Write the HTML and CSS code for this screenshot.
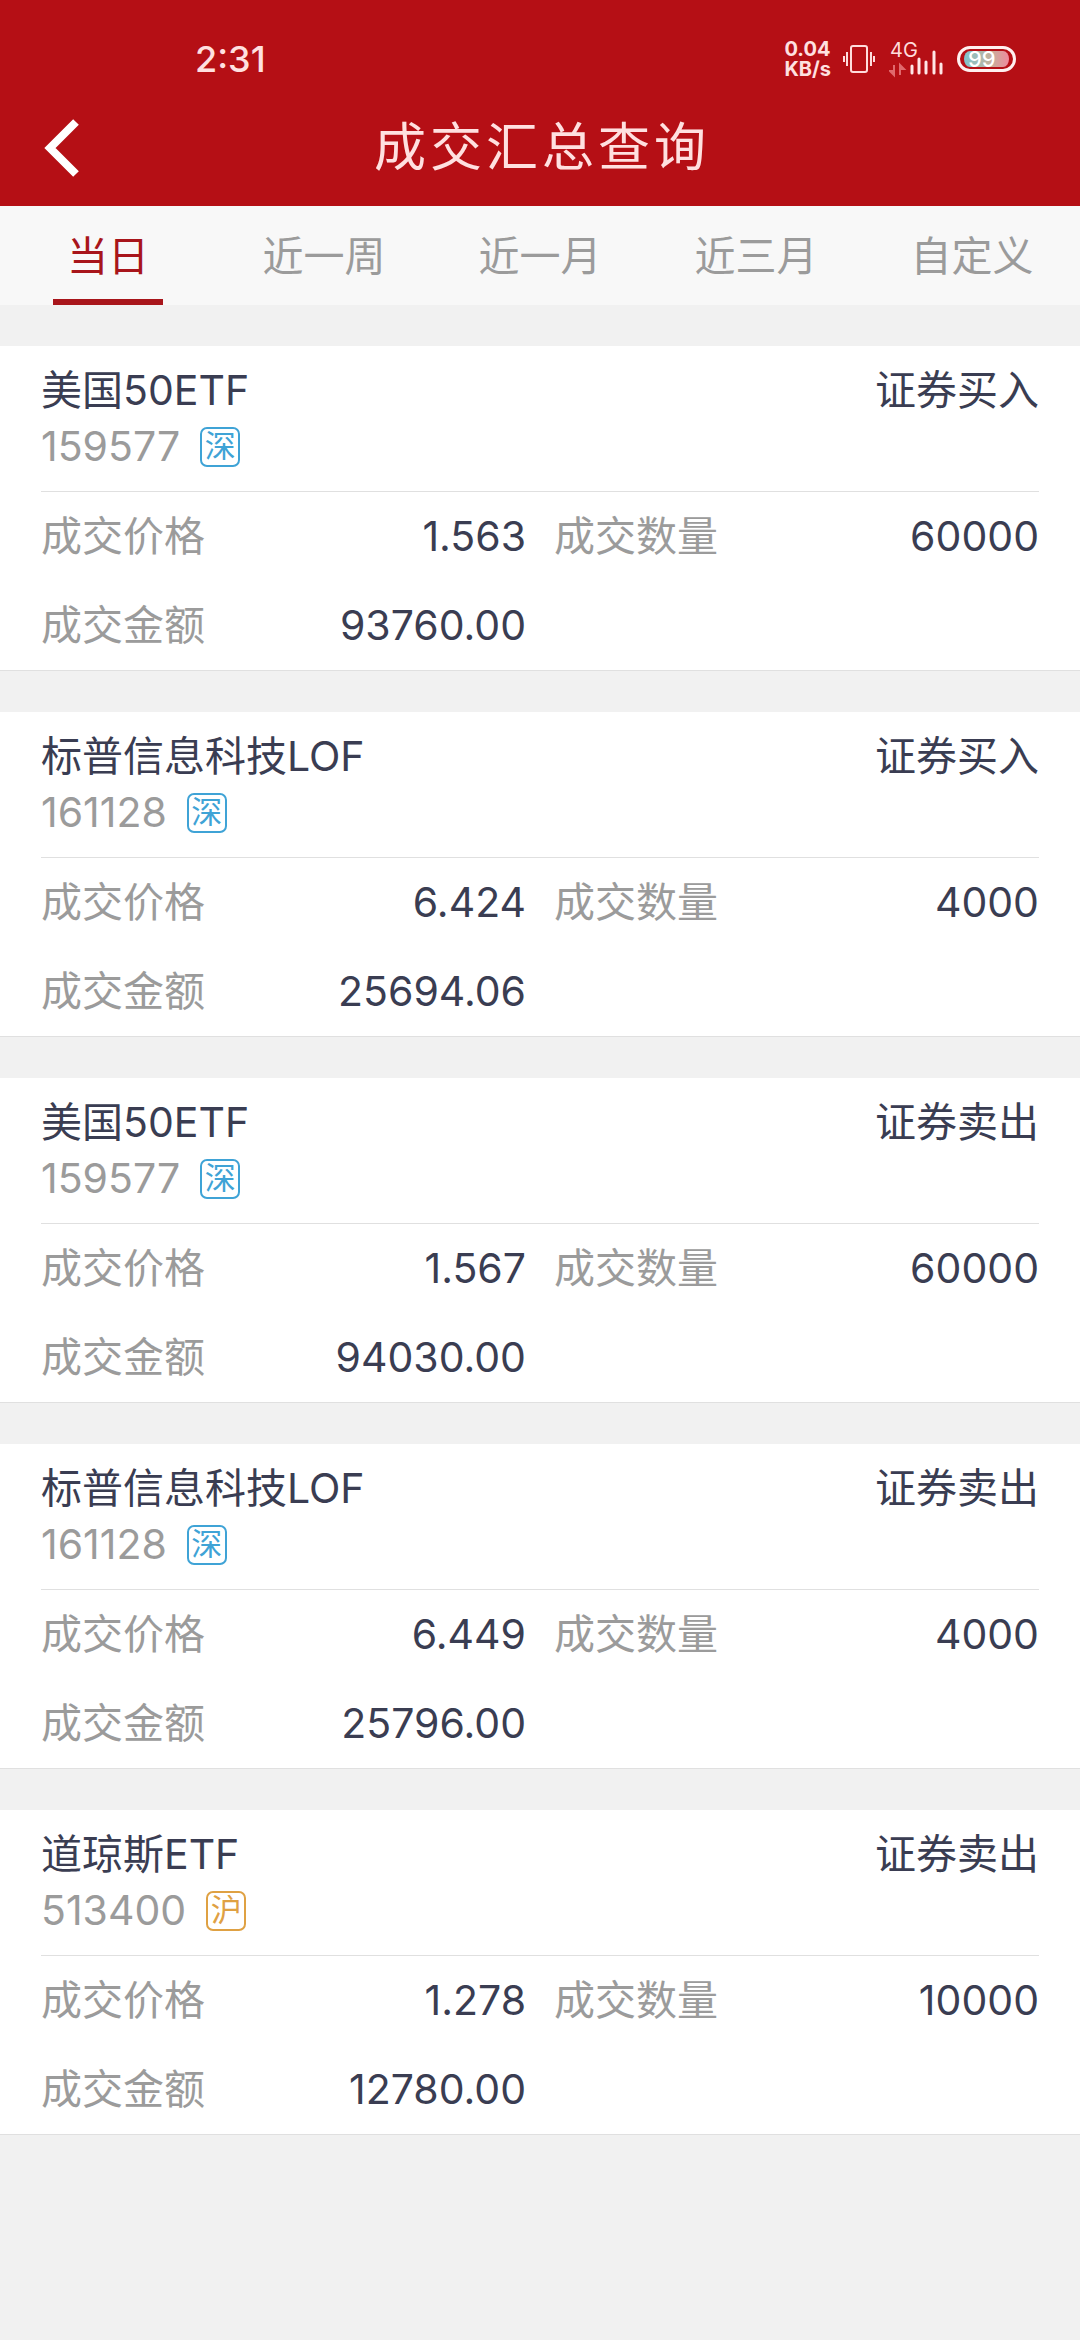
FILE: index.html
```html
<!DOCTYPE html>
<html lang="zh-CN">
<head>
    <meta charset="UTF-8">
    <meta name="viewport" content="width=device-width, initial-scale=1.0">
    <title>成交汇总查询</title>
    <link rel="stylesheet" href="styles.css">
</head>
<body>
    <!-- Header -->
    <header class="header">
        <div class="status-bar">
            <span class="time">2:31</span>
            <div class="status-icons">
                <div class="speed"><div>0.04</div><div>KB/s</div></div>
                <svg class="vibrate" width="32" height="30" viewBox="0 0 32 30" fill="none" stroke="#ffdcdc" stroke-width="2">
                    <rect x="8" y="2" width="16" height="26" rx="2"/>
                    <path d="M4 8v14M1 12v6M28 8v14M31 12v6"/>
                </svg>
                <svg class="signal" width="56" height="46" viewBox="0 -6 56 46">
                    <text x="1" y="15" font-size="20" fill="#ffdcdc">4G</text>
                    <path d="M5 23v10M1 29l4 4v-4zM11 33V23M11 23l4 4h-4z" fill="#e0696d" stroke="#e0696d" stroke-width="2"/>
                    <path d="M23 24v7M30 17v14M37 20v11M45 10v21M52 22v9" stroke="#ffe6e6" stroke-width="3" stroke-linecap="round"/>
                </svg>
                <div class="battery"><span>99</span></div>
            </div>
        </div>
        <div class="title-bar">
            <button class="back" aria-label="返回">
                <svg width="40" height="60" viewBox="0 0 40 60" fill="none" stroke="#fff" stroke-width="8">
                    <path d="M34 4L8 30l26 26"/>
                </svg>
            </button>
            <h1>成交汇总查询</h1>
        </div>
    </header>

    <!-- Date range -->
    <nav class="tabs">
        <button class="tab active">当日</button>
        <button class="tab">近一周</button>
        <button class="tab">近一月</button>
        <button class="tab">近三月</button>
        <button class="tab">自定义</button>
    </nav>

    <!-- Deals -->
    <main class="deals">
        <section class="deal">
            <div class="deal-head">
                <div class="row"><h2>美国50ETF</h2><span>证券买入</span></div>
                <div class="code">159577 <span class="market sz">深</span></div>
            </div>
            <dl class="deal-data">
                <div><dt>成交价格</dt><dd>1.563</dd></div>
                <div><dt>成交数量</dt><dd>60000</dd></div>
                <div><dt>成交金额</dt><dd>93760.00</dd></div>
            </dl>
        </section>

        <section class="deal">
            <div class="deal-head">
                <div class="row"><h2>标普信息科技LOF</h2><span>证券买入</span></div>
                <div class="code">161128 <span class="market sz">深</span></div>
            </div>
            <dl class="deal-data">
                <div><dt>成交价格</dt><dd>6.424</dd></div>
                <div><dt>成交数量</dt><dd>4000</dd></div>
                <div><dt>成交金额</dt><dd>25694.06</dd></div>
            </dl>
        </section>

        <section class="deal">
            <div class="deal-head">
                <div class="row"><h2>美国50ETF</h2><span>证券卖出</span></div>
                <div class="code">159577 <span class="market sz">深</span></div>
            </div>
            <dl class="deal-data">
                <div><dt>成交价格</dt><dd>1.567</dd></div>
                <div><dt>成交数量</dt><dd>60000</dd></div>
                <div><dt>成交金额</dt><dd>94030.00</dd></div>
            </dl>
        </section>

        <section class="deal">
            <div class="deal-head">
                <div class="row"><h2>标普信息科技LOF</h2><span>证券卖出</span></div>
                <div class="code">161128 <span class="market sz">深</span></div>
            </div>
            <dl class="deal-data">
                <div><dt>成交价格</dt><dd>6.449</dd></div>
                <div><dt>成交数量</dt><dd>4000</dd></div>
                <div><dt>成交金额</dt><dd>25796.00</dd></div>
            </dl>
        </section>

        <section class="deal">
            <div class="deal-head">
                <div class="row"><h2>道琼斯ETF</h2><span>证券卖出</span></div>
                <div class="code">513400 <span class="market sh">沪</span></div>
            </div>
            <dl class="deal-data">
                <div><dt>成交价格</dt><dd>1.278</dd></div>
                <div><dt>成交数量</dt><dd>10000</dd></div>
                <div><dt>成交金额</dt><dd>12780.00</dd></div>
            </dl>
        </section>
    </main>

    <script>
        document.querySelectorAll('.tab').forEach(tab => {
            tab.addEventListener('click', () => {
                document.querySelector('.tab.active').classList.remove('active');
                tab.classList.add('active');
            });
        });
    </script>
</body>
</html>
```
FILE: styles.css
```css
/* Global Styles */
* {
    margin: 0;
    padding: 0;
    box-sizing: border-box;
}

body {
    font-family: Inter, "Noto Sans CJK SC", sans-serif;
    font-size: 41px;
    background-color: #f1f1f1;
    color: #3a3d52;
}

button {
    font: inherit;
    color: inherit;
    background: none;
    border: none;
    cursor: pointer;
}

h1, h2 {
    font-size: inherit;
    font-weight: normal;
}

/* Header */
.header {
    background-color: #b50f15;
    color: #ffe0e0;
}

.status-bar {
    display: flex;
    justify-content: space-between;
    align-items: center;
    height: 90px;
    padding: 28px 64px 0 195px;
}

.time {
    font-size: 36px;
    font-weight: 500;
}

.status-icons {
    display: flex;
    align-items: center;
}

.speed {
    font-size: 20px;
    font-weight: bold;
    line-height: 20px;
}

.vibrate {
    margin: 0 14px 0 12px;
}

.battery {
    display: flex;
    align-items: center;
    width: 59px;
    height: 26px;
    margin-left: 12px;
    padding: 2px 4px;
    border: 3px solid #fff0f0;
    border-radius: 13px;
    background: linear-gradient(90deg, #7fc4cc, #c5b09c 60%, #f08a9c) content-box;
}

.battery span {
    padding-left: 4px;
    color: #fff;
    font-size: 22px;
    font-weight: 500;
    line-height: 26px;
}

.title-bar {
    display: grid;
    grid-template-columns: 120px 1fr 120px;
    align-items: center;
    height: 116px;
}

.back {
    height: 60px;
    padding-left: 42px;
    text-align: left;
}

.back svg {
    display: block;
}

.title-bar h1 {
    padding-left: 4px;
    font-size: 52px;
    line-height: 60px;
    letter-spacing: 4px;
    text-align: center;
}

/* Tabs */
.tabs {
    display: flex;
    background-color: #f8f8f8;
    color: #9b9b9b;
}

.tab {
    position: relative;
    flex: 1;
    height: 99px;
    padding-bottom: 6px;
}

.tab.active {
    color: #a8151b;
}

.tab.active::after {
    content: '';
    position: absolute;
    bottom: 0;
    left: 50%;
    width: 110px;
    height: 6px;
    margin-left: -55px;
    background: #a8151b;
}

/* Deals */
.deals {
    display: flex;
    flex-direction: column;
    gap: 41px;
    padding: 41px 0;
}

.deal {
    padding: 0 41px;
    background-color: #fff;
    border-bottom: 1px solid #e0e0e0;
}

.deal-head {
    padding: 16px 0;
    border-bottom: 1px solid #e0e0e0;
}

.row {
    display: flex;
    justify-content: space-between;
    line-height: 56px;
}

.code {
    display: flex;
    align-items: center;
    gap: 20px;
    line-height: 57px;
    color: #9b9b9b;
}

.market {
    width: 40px;
    height: 40px;
    border: 2px solid;
    border-radius: 7px;
    font-size: 31px;
    line-height: 34px;
    text-align: center;
}

.sz {
    color: #3fa3d6;
}

.sh {
    color: #dfa143;
}

.deal-data {
    display: grid;
    grid-template-columns: 1fr 1fr;
    column-gap: 28px;
}

.deal-data div {
    display: flex;
    justify-content: space-between;
    line-height: 89px;
}

.deal-data dt {
    color: #9b9b9b;
}
```
